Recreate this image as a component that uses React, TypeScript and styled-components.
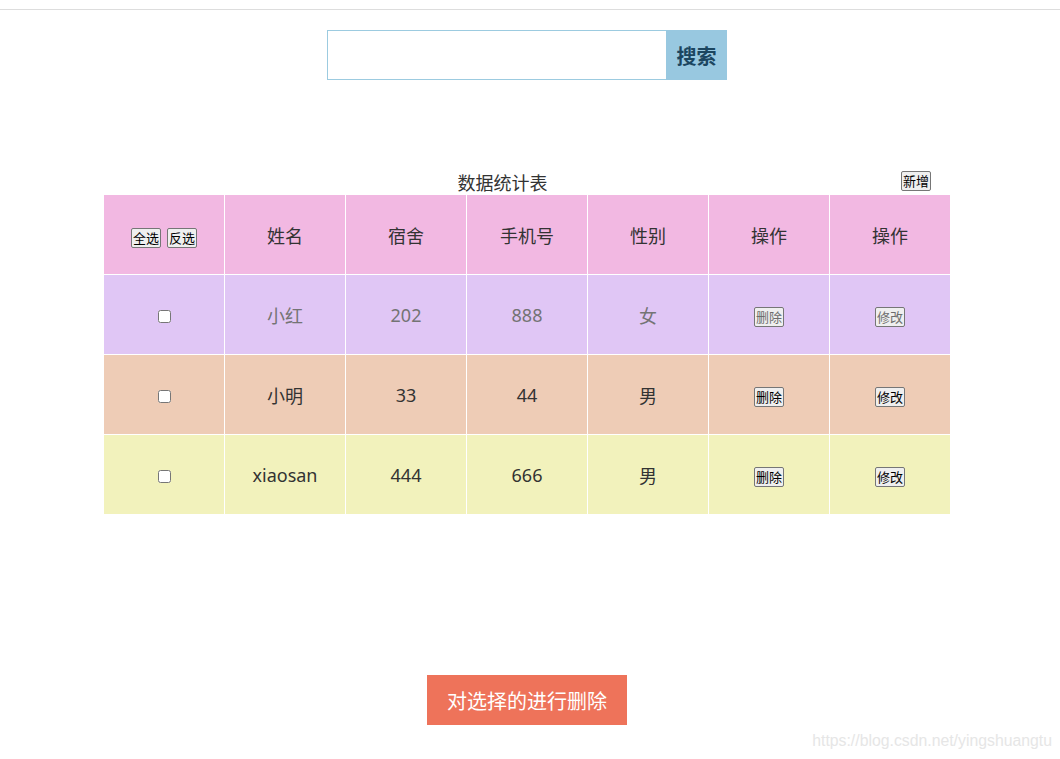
import styled, { createGlobalStyle } from 'styled-components'

const GlobalStyle = createGlobalStyle`
  html, body {
    margin: 0;
    padding: 0;
    background: #fff;
  }
  body {
    font-family: "Noto Sans", "Noto Sans CJK SC", sans-serif;
    color: #333;
  }
`

type Student = {
  name: string
  room: string
  phone: string
  gender: string
  tone: 'lilac' | 'peach' | 'lemon'
  muted?: boolean
}

const students: Student[] = [
  { name: '小红', room: '202', phone: '888', gender: '女', tone: 'lilac', muted: true },
  { name: '小明', room: '33', phone: '44', gender: '男', tone: 'peach' },
  { name: 'xiaosan', room: '444', phone: '666', gender: '男', tone: 'lemon' },
]

const toneColors = {
  head: '#f2b8e2',
  lilac: '#e0c6f5',
  peach: '#eeccb6',
  lemon: '#f2f2bc',
}

function App() {
  return (
    <Page>
      <GlobalStyle />
      <TopRule />
      <SearchBar>
        <SearchInput type="text" />
        <SearchButton type="button">搜索</SearchButton>
      </SearchBar>

      <TableBlock>
        <CaptionRow>
          <CaptionTitle>数据统计表</CaptionTitle>
          <SmallButton type="button" $gap>新增</SmallButton>
        </CaptionRow>
        <DataTable>
          <thead>
            <tr>
              <HeadCell>
                <SmallButton type="button">全选</SmallButton>
                <SmallButton type="button">反选</SmallButton>
              </HeadCell>
              <HeadCell>姓名</HeadCell>
              <HeadCell>宿舍</HeadCell>
              <HeadCell>手机号</HeadCell>
              <HeadCell>性别</HeadCell>
              <HeadCell>操作</HeadCell>
              <HeadCell>操作</HeadCell>
            </tr>
          </thead>
          <tbody>
            {students.map((s) => (
              <Row key={s.name} $tone={s.tone} $muted={!!s.muted}>
                <Cell>
                  <Check type="checkbox" />
                </Cell>
                <Cell>{s.name}</Cell>
                <Cell>{s.room}</Cell>
                <Cell>{s.phone}</Cell>
                <Cell>{s.gender}</Cell>
                <Cell>
                  <SmallButton type="button" $muted={!!s.muted}>删除</SmallButton>
                </Cell>
                <Cell>
                  <SmallButton type="button" $muted={!!s.muted}>修改</SmallButton>
                </Cell>
              </Row>
            ))}
          </tbody>
        </DataTable>
      </TableBlock>

      <DangerButton type="button">对选择的进行删除</DangerButton>
      <Watermark>https://blog.csdn.net/yingshuangtu</Watermark>
    </Page>
  )
}

const Page = styled.div`
  position: relative;
  width: 1054px;
  height: 759px;
  display: flex;
  flex-direction: column;
  align-items: center;
`

const TopRule = styled.div`
  align-self: stretch;
  width: 1060px;
  height: 1px;
  margin-top: 9px;
  background: #dddddd;
`

const SearchBar = styled.div`
  display: flex;
  margin-top: 20px;
  height: 50px;
`

const SearchInput = styled.input`
  box-sizing: border-box;
  width: 339px;
  height: 50px;
  margin: 0;
  border: 1px solid #9ccbe0;
  border-right: none;
  outline: none;
  padding: 0 10px;
  font-size: 16px;
`

const SearchButton = styled.button`
  width: 61px;
  height: 50px;
  margin: 0;
  border: none;
  background: #98c8e0;
  color: #1b4660;
  font-family: "Noto Sans CJK SC", sans-serif;
  font-size: 20px;
  font-weight: 700;
  padding: 0;
`

const TableBlock = styled.div`
  margin-top: 90px;
  display: flex;
  flex-direction: column;
`

const CaptionRow = styled.div`
  display: flex;
  align-items: center;
  height: 24px;
  padding-left: 1px;
`

const CaptionTitle = styled.div`
  flex: 1;
  text-align: center;
  font-family: "Noto Sans CJK SC", sans-serif;
  font-size: 18px;
  line-height: 24px;
  color: #333;
`

const DataTable = styled.table`
  border-collapse: separate;
  border-spacing: 1px;
  background: #fff;
`

const HeadCell = styled.th`
  width: 120px;
  height: 79px;
  padding: 0;
  background: ${toneColors.head};
  font-family: "Noto Sans CJK SC", sans-serif;
  font-size: 18px;
  font-weight: 400;
  color: #333;
  text-align: center;
  vertical-align: middle;

  & > button + button {
    margin-left: 6px;
  }
`

const Row = styled.tr<{ $tone: 'lilac' | 'peach' | 'lemon'; $muted: boolean }>`
  background: ${({ $tone }) => toneColors[$tone]};
  color: ${({ $muted }) => ($muted ? '#747474' : '#333')};
`

const Cell = styled.td`
  width: 120px;
  height: 79px;
  padding: 0;
  text-align: center;
  vertical-align: middle;
  font-family: "Noto Sans", "Noto Sans CJK SC", sans-serif;
  font-size: 18px;
`

const Check = styled.input`
  width: 13px;
  height: 13px;
  margin: 0;
  vertical-align: middle;
`

const SmallButton = styled.button<{ $muted?: boolean; $gap?: boolean }>`
  box-sizing: border-box;
  height: 20px;
  padding: 0 1px;
  margin: ${({ $gap }) => ($gap ? '-3px 20px 0 0' : '0')};
  border: 1px solid #767676;
  border-radius: 2px;
  background: #efefef;
  color: ${({ $muted }) => ($muted ? '#6d6d6d' : '#000')};
  font-family: "Noto Sans CJK SC", sans-serif;
  font-size: 13px;
  line-height: 16px;
  vertical-align: middle;
`

const DangerButton = styled.button`
  margin-top: 160px;
  width: 200px;
  height: 50px;
  border: none;
  padding: 0;
  background: #ee735a;
  color: #fff;
  font-family: "Noto Sans CJK SC", sans-serif;
  font-size: 20px;
`

const Watermark = styled.div`
  position: absolute;
  right: 2px;
  bottom: 9px;
  font-family: "Liberation Sans", Arial, sans-serif;
  font-size: 15.8px;
  color: #e6e6e6;
`

export default App
